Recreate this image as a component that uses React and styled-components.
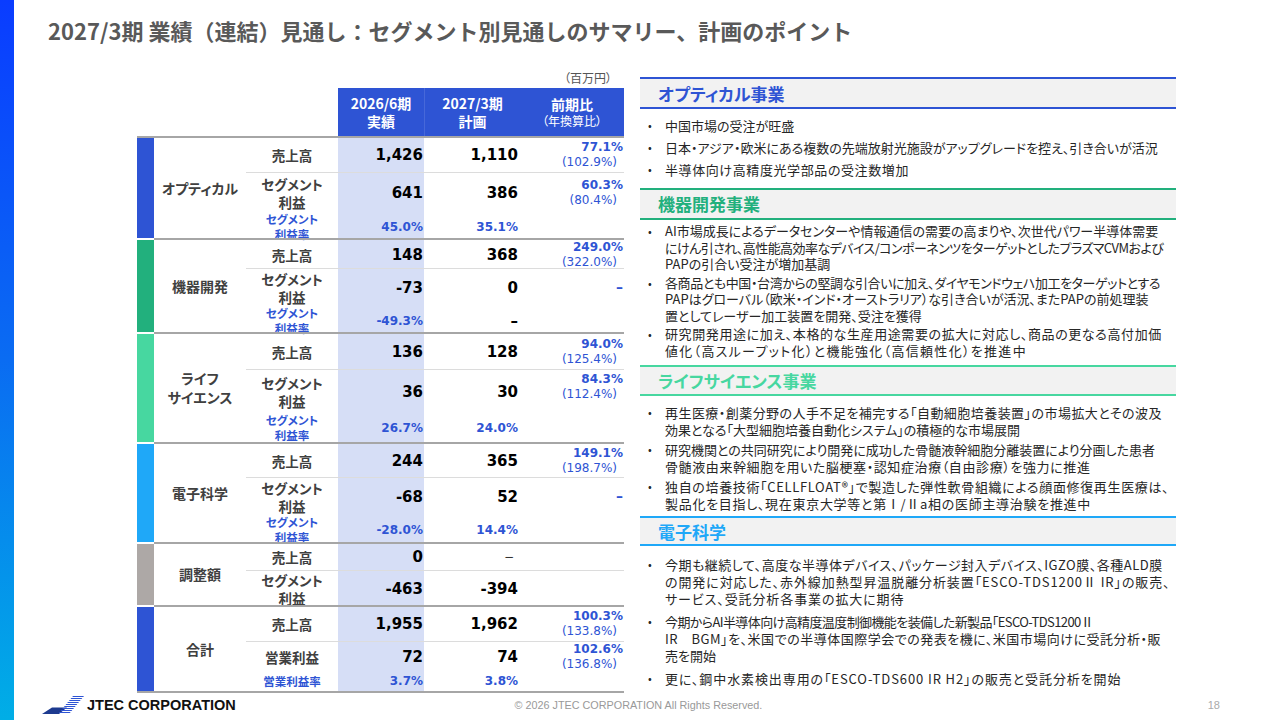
import { Fragment } from 'react'
import { createGlobalStyle, styled } from 'styled-components'

const BLUE = '#2e54d4'

const GlobalStyle = createGlobalStyle`
  body {
    margin: 0;
    font-family: "Noto Sans CJK JP", "Noto Sans", sans-serif;
    font-feature-settings: "palt";
    background: #fff;
  }
`

const groups = [
  {
    name: ['オプティカル'],
    color: BLUE,
    rows: [
      { label: ['売上高'], v1: '1,426', v2: '1,110', ratio: ['77.1%', '(102.9%)'], h: 34 },
      { label: ['セグメント', '利益'], v1: '641', v2: '386', ratio: ['60.3%', '(80.4%)'], h: 40, divider: true },
      { rate: true, label: ['セグメント', '利益率'], v1: '45.0%', v2: '35.1%', h: 26 },
    ],
  },
  {
    name: ['機器開発'],
    color: '#22b07d',
    rows: [
      { label: ['売上高'], v1: '148', v2: '368', ratio: ['249.0%', '(322.0%)'], h: 28 },
      { label: ['セグメント', '利益'], v1: '-73', v2: '0', dash: true, h: 38, divider: true },
      { rate: true, label: ['セグメント', '利益率'], v1: '-49.3%', v2: '–', v2Black: true, h: 26 },
    ],
  },
  {
    name: ['ライフ', 'サイエンス'],
    color: '#47d7a0',
    rows: [
      { label: ['売上高'], v1: '136', v2: '128', ratio: ['94.0%', '(125.4%)'], h: 35 },
      { label: ['セグメント', '利益'], v1: '36', v2: '30', ratio: ['84.3%', '(112.4%)'], top: true, h: 44, divider: true },
      { rate: true, label: ['セグメント', '利益率'], v1: '26.7%', v2: '24.0%', h: 29 },
    ],
  },
  {
    name: ['電子科学'],
    color: '#1fa8f8',
    rows: [
      { label: ['売上高'], v1: '244', v2: '365', ratio: ['149.1%', '(198.7%)'], h: 33 },
      { label: ['セグメント', '利益'], v1: '-68', v2: '52', dash: true, h: 38, divider: true },
      { rate: true, label: ['セグメント', '利益率'], v1: '-28.0%', v2: '14.4%', h: 27 },
    ],
  },
  {
    name: ['調整額'],
    color: '#ada8a6',
    rows: [
      { label: ['売上高'], v1: '0', v2: '−', thin: true, h: 26 },
      { label: ['セグメント', '利益'], v1: '-463', v2: '-394', h: 35, divider: true },
    ],
  },
  {
    name: ['合計'],
    color: BLUE,
    rows: [
      { label: ['売上高'], v1: '1,955', v2: '1,962', ratio: ['100.3%', '(133.8%)'], h: 34 },
      { label: ['営業利益'], v1: '72', v2: '74', ratio: ['102.6%', '(136.8%)'], h: 30, divider: true },
      { rate: true, label: ['営業利益率'], v1: '3.7%', v2: '3.8%', h: 20 },
    ],
  },
]

// a line is either plain text or [text, letter-spacing] to follow the slide's wrap widths
const sections = [
  {
    title: 'オプティカル事業',
    color: BLUE,
    h: 32,
    mt: 0,
    listTop: 8,
    lh: 17,
    gap: 5,
    items: [
      ['中国市場の受注が旺盛'],
      ['日本・アジア・欧米にある複数の先端放射光施設がアップグレードを控え、引き合いが活況'],
      [['半導体向け高精度光学部品の受注数増加', 0.6]],
    ],
  },
  {
    title: '機器開発事業',
    color: '#22b07d',
    h: 32,
    mt: 9.5,
    listTop: 3.75,
    lh: 16.5,
    gap: 2,
    items: [
      [
        'AI市場成長によるデータセンターや情報通信の需要の高まりや、次世代パワー半導体需要',
        ['にけん引され、高性能高効率なデバイス/コンポーネンツをターゲットとしたプラズマCVMおよび', -0.55],
        'PAPの引合い受注が増加基調',
      ],
      [
        ['各商品とも中国・台湾からの堅調な引合いに加え、ダイヤモンドウェハ加工をターゲットとする', -0.4],
        'PAPはグローバル（欧米・インド・オーストラリア）な引き合いが活況、またPAPの前処理装',
        '置としてレーザー加工装置を開発、受注を獲得',
      ],
      [
        ['研究開発用途に加え、本格的な生産用途需要の拡大に対応し、商品の更なる高付加価', 0.6],
        ['値化（高スループット化）と機能強化（高信頼性化）を推進中', 1.3],
      ],
    ],
  },
  {
    title: 'ライフサイエンス事業',
    color: '#47d7a0',
    h: 31,
    mt: 6,
    listTop: 7.5,
    lh: 17,
    gap: 3,
    items: [
      [
        ['再生医療・創薬分野の人手不足を補完する「自動細胞培養装置」の市場拡大とその波及', 0.45],
        '効果となる「大型細胞培養自動化システム」の積極的な市場展開',
      ],
      [
        '研究機関との共同研究により開発に成功した骨髄液幹細胞分離装置により分画した患者',
        ['骨髄液由来幹細胞を用いた脳梗塞・認知症治療（自由診療）を強力に推進', 0.6],
      ],
      [
        ['独自の培養技術「CELLFLOAT®」で製造した弾性軟骨組織による顔面修復再生医療は、', 0.65],
        ['製品化を目指し、現在東京大学等と第Ⅰ/Ⅱa相の医師主導治験を推進中', 0.7],
      ],
    ],
  },
  {
    title: '電子科学',
    color: '#1fa8f8',
    h: 30,
    mt: 4.5,
    listTop: 9.5,
    lh: 17,
    gap: 6,
    items: [
      [
        ['今期も継続して、高度な半導体デバイス、パッケージ封入デバイス、IGZO膜、各種ALD膜', 0.5],
        ['の開発に対応した、赤外線加熱型昇温脱離分析装置「ESCO-TDS1200Ⅱ IR」の販売、', 0.9],
        ['サービス、受託分析各事業の拡大に期待', 0.9],
      ],
      [
        ['今期からAI半導体向け高精度温度制御機能を装備した新製品「ESCO-TDS1200Ⅱ', -0.6],
        ['IR　BGM」を、米国での半導体国際学会での発表を機に、米国市場向けに受託分析・販', 0.5],
        '売を開始',
      ],
      [['更に、鋼中水素検出専用の「ESCO-TDS600 IR H2」の販売と受託分析を開始', 0.9]],
    ],
  },
]

// multi-line label kept in one block so flex parents don't split it
const Lines = ({ lines }) => (
  <LineBox>
    {lines.map((line, i) => (
      <Fragment key={i}>
        {i > 0 && <br />}
        {Array.isArray(line) ? <Spaced $ls={line[1]}>{line[0]}</Spaced> : line}
      </Fragment>
    ))}
  </LineBox>
)

const Logo = () => (
  <svg width="42" height="18" viewBox="0 0 42 18">
    <defs>
      <pattern id="hatch" width="2" height="2" patternUnits="userSpaceOnUse">
        <rect width="2" height="1" fill="#2e54d4" />
      </pattern>
    </defs>
    <polygon points="0,18 10,11.5 25,11.5 17,18" fill="#1d3a8f" />
    <polygon points="16,18 31,0 42,0 27,18" fill="url(#hatch)" />
  </svg>
)

const App = () => (
  <>
    <GlobalStyle />
    <Page>
      <SideBar />
      <Main>
        <Title>2027/3期 業績（連結）見通し：セグメント別見通しのサマリー、計画のポイント</Title>
        <Body>
          <TableWrap>
            <Unit>（百万円）</Unit>
            <Header>
              <span />
              <HeadCell>
                <Lines lines={['2026/6期', '実績']} />
              </HeadCell>
              <HeadCell $split>
                <Lines lines={['2027/3期', '計画']} />
              </HeadCell>
              <HeadCell>
                <LineBox>前期比</LineBox>
                <HeadSub>（年換算比）</HeadSub>
              </HeadCell>
            </Header>
            <Rule />
            {groups.map((g, gi) => (
              <Group key={gi}>
                <Bar $color={g.color} $first={gi === 0} />
                <GroupBody $first={gi === 0}>
                  <SegName>
                    <Lines lines={g.name} />
                  </SegName>
                  <Rows>
                    {g.rows.map((r, ri) => (
                      <Row key={ri} $h={r.h} $divider={r.divider}>
                        <ItemCell $rate={r.rate}>
                          <Lines lines={r.label} />
                        </ItemCell>
                        <ValueCell $shade $rate={r.rate} $pr={1}>
                          {r.v1}
                        </ValueCell>
                        <ValueCell
                          $rate={r.rate && !r.v2Black}
                          $thin={r.thin}
                          $pr={r.thin ? 6 : 2}
                        >
                          {r.v2}
                        </ValueCell>
                        <RatioCell $top={r.top}>
                          {r.ratio && (
                            <>
                              <RatioMain>{r.ratio[0]}</RatioMain>
                              <RatioSub>{r.ratio[1]}</RatioSub>
                            </>
                          )}
                          {r.dash && <RatioMain $dash>–</RatioMain>}
                        </RatioCell>
                      </Row>
                    ))}
                  </Rows>
                </GroupBody>
              </Group>
            ))}
            <Rule />
          </TableWrap>
          <Side>
            {sections.map((s) => (
              <div key={s.title}>
                <SectionHead $color={s.color} $h={s.h} $mt={s.mt}>
                  {s.title}
                </SectionHead>
                <BulletList $mt={s.listTop} $gap={s.gap}>
                  {s.items.map((item, i) => (
                    <Bullet key={i} $lh={s.lh}>
                      <Dot>•</Dot>
                      <Lines lines={item} />
                    </Bullet>
                  ))}
                </BulletList>
              </div>
            ))}
          </Side>
        </Body>
        <Footer>
          <LogoBox>
            <Logo />
            <LogoText>JTEC CORPORATION</LogoText>
          </LogoBox>
          <Copyright>© 2026 JTEC CORPORATION All Rights Reserved.</Copyright>
          <PageNum>18</PageNum>
        </Footer>
      </Main>
    </Page>
  </>
)

export default App

const LineBox = styled.span`
  display: block;
`

const Spaced = styled.span`
  letter-spacing: ${(p) => p.$ls}px;
`

const Page = styled.div`
  width: 1280px;
  height: 720px;
  display: flex;
  overflow: hidden;
  background: #fff;
`

const SideBar = styled.div`
  width: 14px;
  flex-shrink: 0;
  background: linear-gradient(180deg, #0a3cff 0%, #0a6cf2 50%, #00aee6 100%);
`

const Main = styled.div`
  flex: 1;
  display: flex;
  flex-direction: column;
`

const Title = styled.h1`
  margin: 15px 0 0 34px;
  font-size: 22px;
  line-height: 30px;
  font-weight: 700;
  color: #595959;
  white-space: nowrap;
  font-feature-settings: normal;
`

const Body = styled.div`
  display: flex;
  gap: 16px;
  margin: 25px 0 0 123px;
  height: 623px;
`

const TableWrap = styled.div`
  width: 487px;
  display: flex;
  flex-direction: column;
`

const Unit = styled.div`
  height: 16px;
  line-height: 16px;
  text-align: right;
  padding-right: 12px;
  margin-bottom: 2px;
  font-size: 12px;
  color: #555;
`

const Header = styled.div`
  display: grid;
  grid-template-columns: 201px 86px 96px 104px;
  height: 48px;
`

const HeadCell = styled.div`
  display: flex;
  flex-direction: column;
  align-items: center;
  justify-content: center;
  text-align: center;
  background: ${BLUE};
  color: #fff;
  font-size: 14px;
  font-weight: 700;
  line-height: 18px;
  border-left: ${(p) => (p.$split ? '1px solid rgba(255,255,255,0.12)' : 'none')};
`

const HeadSub = styled.span`
  display: block;
  font-size: 12px;
  font-weight: 400;
  line-height: 16px;
`

const Rule = styled.div`
  height: 2px;
  background: #a6a6a6;
`

const Group = styled.div`
  display: flex;
`

const Bar = styled.div`
  width: 17px;
  flex-shrink: 0;
  margin-top: ${(p) => (p.$first ? 0 : 2)}px;
  background: ${(p) => p.$color};
`

const GroupBody = styled.div`
  flex: 1;
  display: flex;
  border-top: ${(p) => (p.$first ? 'none' : '2px solid #a6a6a6')};
`

const SegName = styled.div`
  width: 92px;
  flex-shrink: 0;
  display: flex;
  align-items: center;
  justify-content: center;
  text-align: center;
  font-size: 14px;
  font-weight: 700;
  line-height: 19px;
  color: #404040;
`

const Rows = styled.div`
  flex: 1;
  display: flex;
  flex-direction: column;
`

const Row = styled.div`
  box-sizing: border-box;
  display: grid;
  grid-template-columns: 92px 86px 96px 104px;
  height: ${(p) => p.$h}px;
  border-top: ${(p) => (p.$divider ? '1px solid #dcdcdc' : 'none')};
`

const ItemCell = styled.div`
  display: flex;
  align-items: center;
  justify-content: center;
  text-align: center;
  font-weight: 700;
  font-size: ${(p) => (p.$rate ? 11.5 : 13.5)}px;
  line-height: ${(p) => (p.$rate ? 15 : 18)}px;
  color: ${(p) => (p.$rate ? BLUE : '#404040')};
`

const ValueCell = styled.div`
  display: flex;
  align-items: center;
  justify-content: flex-end;
  padding-right: ${(p) => p.$pr}px;
  background: ${(p) => (p.$shade ? '#d6def6' : 'transparent')};
  font-family: "DejaVu Sans", sans-serif;
  font-weight: ${(p) => (p.$thin ? 400 : 700)};
  font-size: ${(p) => (p.$rate || p.$thin ? 12 : 15)}px;
  color: ${(p) => (p.$rate ? BLUE : p.$thin ? '#333' : '#000')};
`

const RatioCell = styled.div`
  display: flex;
  flex-direction: column;
  align-items: flex-end;
  justify-content: ${(p) => (p.$top ? 'flex-start' : 'center')};
  padding: ${(p) => (p.$top ? 2 : 0)}px 1px 0 0;
  font-family: "DejaVu Sans", sans-serif;
  font-size: 12px;
  line-height: 15px;
  color: ${BLUE};
`

const RatioMain = styled.span`
  font-weight: 700;
  font-size: ${(p) => (p.$dash ? 14 : 12)}px;
`

const RatioSub = styled.span`
  padding-right: 6px;
`

const Side = styled.div`
  width: 536px;
  padding-top: 7px;
  display: flex;
  flex-direction: column;
`

const SectionHead = styled.div`
  box-sizing: border-box;
  height: ${(p) => p.$h}px;
  margin-top: ${(p) => p.$mt}px;
  display: flex;
  align-items: center;
  padding-left: 18px;
  background: #f2f2f2;
  border-top: 2px solid ${(p) => p.$color};
  border-bottom: 2px solid ${(p) => p.$color};
  color: ${(p) => p.$color};
  font-size: 17px;
  font-weight: 700;
`

const BulletList = styled.ul`
  list-style: none;
  margin: ${(p) => p.$mt}px 0 0;
  padding: 0 0 0 8px;
  display: flex;
  flex-direction: column;
  gap: ${(p) => p.$gap}px;
`

const Bullet = styled.li`
  display: flex;
  font-size: 13px;
  line-height: ${(p) => p.$lh}px;
  color: #262626;
  white-space: nowrap;
`

const Dot = styled.span`
  width: 17px;
  flex-shrink: 0;
  font-size: 11px;
`

const Footer = styled.div`
  height: 27px;
  padding-bottom: 3px;
  box-sizing: border-box;
  display: flex;
  align-items: center;
`

const LogoBox = styled.div`
  width: 200px;
  margin-left: 28px;
  display: flex;
  align-items: center;
  gap: 3px;
`

const LogoText = styled.span`
  font-family: "Liberation Sans", Arial, sans-serif;
  font-weight: 700;
  font-size: 14.5px;
  color: #111;
`

const Copyright = styled.div`
  flex: 1;
  text-align: center;
  font-family: "Liberation Sans", Arial, sans-serif;
  font-size: 10.8px;
  color: #999;
`

const PageNum = styled.div`
  width: 185px;
  margin-right: 60px;
  text-align: right;
  font-family: "Liberation Sans", Arial, sans-serif;
  font-size: 11px;
  color: #aaa;
`
